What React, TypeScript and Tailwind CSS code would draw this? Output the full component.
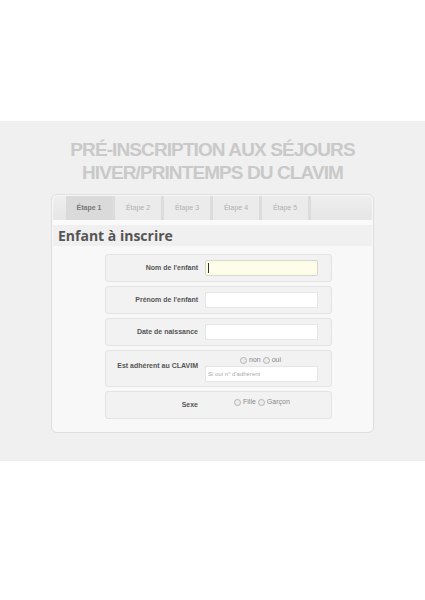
const tabs = ["Étape 1", "Étape 2", "Étape 3", "Étape 4", "Étape 5"];

function Row({ label, children, tall = false }: { label: string; children: React.ReactNode; tall?: boolean }) {
  return (
    <div
      className={`flex rounded-[3px] border border-[#e4e4e4] bg-[#f2f2f2] ${
        tall ? "h-[37px] items-start pt-[4px]" : "h-[28px] items-center"
      }`}
    >
      <div className={`w-[92px] shrink-0 text-right text-[7px] font-bold text-[#555] ${tall ? "pt-[6px]" : ""}`}>
        {label}
      </div>
      <div className="ml-[7px] flex-1">{children}</div>
    </div>
  );
}

function Radio({ label }: { label: string }) {
  return (
    <span className="inline-flex items-center gap-[2px]">
      <span className="inline-block h-[7px] w-[7px] rounded-full border border-[#b4b4b4] bg-[#ececec]" />
      <span>{label}</span>
    </span>
  );
}

export default function App() {
  return (
    <div className="min-h-[600px] bg-white" style={{ fontFamily: "'Liberation Sans', sans-serif" }}>
      <div className="h-[121px]" />
      <div className="h-[340px] bg-[#f0f0f0] pt-[17px]">
        <h1 className="text-center text-[19px] font-bold uppercase tracking-[-0.9px] text-[#c9c9c9]">
          <div className="leading-[23px]">Pré-inscription aux séjours</div>
          <div className="leading-[23px]">hiver/printemps du CLAVIM</div>
        </h1>

        <div className="ml-[51px] mt-[10px] h-[239px] w-[323px] rounded-[6px] border border-[#dedede] bg-[#f8f8f8] p-[1px]">
          {/* Tabs */}
          <div className="flex h-[24px] rounded-t-[5px] bg-gradient-to-b from-[#eeeeee] to-[#e6e6e6] pl-[13px]">
            {tabs.map((t, i) => (
              <div
                key={t}
                className={`flex w-[49px] items-center justify-center border-r-[3px] border-[#dcdcdc] text-[7px] ${
                  i === 0 ? "bg-[#dadada] font-bold text-[#777]" : "bg-[#ebebeb] text-[#b0b0b0]"
                }`}
              >
                {t}
              </div>
            ))}
          </div>
          <div className="h-[5px] bg-[#fafafa]" />
          {/* Heading */}
          <div className="flex h-[21px] items-center bg-[#f0f0f0] pl-[5px]">
            <span
              className="text-[14px] font-bold text-[#555]"
              style={{ fontFamily: "'Open Sans', sans-serif" }}
            >
              Enfant à inscrire
            </span>
          </div>

          <div className="ml-[52px] mt-[8px] flex w-[227px] flex-col gap-[4px]">
            <Row label="Nom de l'enfant">
              <div className="flex h-[16px] w-[113px] items-center rounded-[2px] border border-[#d8d8c8] bg-[#fefde9] pl-[2px]">
                <span className="h-[10px] w-px bg-[#333]" />
              </div>
            </Row>
            <Row label="Prénom de l'enfant">
              <div className="h-[16px] w-[113px] border border-[#e6e6e6] bg-white" />
            </Row>
            <Row label="Date de naissance">
              <div className="h-[16px] w-[113px] border border-[#e6e6e6] bg-white" />
            </Row>
            <Row label="Est adhérent au CLAVIM" tall>
              <div className="flex flex-col">
                <div className="mt-[1px] flex h-[9px] items-center gap-[2px] pl-[35px] text-[7px] text-[#888]">
                  <Radio label="non" />
                  <Radio label="oui" />
                </div>
                <div className="mt-[1px] flex h-[16px] w-[113px] items-center border border-[#e6e6e6] bg-white pl-[2px] text-[6px] text-[#aaa]">
                  Si oui n° d'adhérent
                </div>
              </div>
            </Row>
            <Row label="Sexe">
              <div className="-mt-[6px] flex items-center gap-[2px] pl-[29px] text-[7px] text-[#888]">
                <Radio label="Fille" />
                <Radio label="Garçon" />
              </div>
            </Row>
          </div>
        </div>
      </div>
    </div>
  );
}
